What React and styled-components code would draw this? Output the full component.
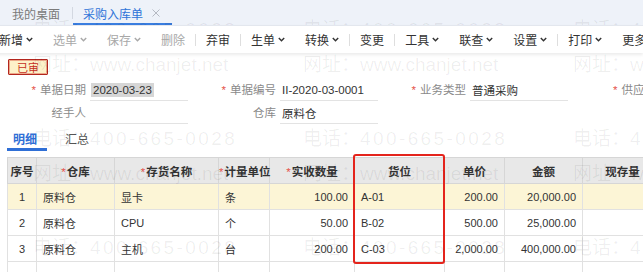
import React from 'react';
import styled, { createGlobalStyle } from 'styled-components';

const GlobalStyle = createGlobalStyle`
  html, body { margin: 0; padding: 0; background: #fff; }
  body {
    font-family: "Liberation Sans", "Noto Sans CJK SC", sans-serif;
    color: #333;
  }
`;

const Page = styled.div`
  position: relative;
  width: 643px;
  height: 272px;
  overflow: hidden;
  background: #fff;
`;

// ---- top page tabs
const TabBar = styled.div`
  display: flex;
  align-items: stretch;
  height: 25px;
  background: #eef2f9;
`;

const PageTab = styled.div`
  display: flex;
  align-items: center;
  gap: 9px;
  box-sizing: border-box;
  padding: 3px ${p => p.$right}px 0 ${p => p.$left}px;
  font-size: 12px;
  color: ${p => (p.$active ? '#2f74d8' : '#7a7a7a')};
  border-bottom: 2px solid ${p => (p.$active ? '#3a7ee0' : 'transparent')};
  white-space: nowrap;
`;

const TabDivider = styled.div`
  align-self: center;
  width: 1px;
  height: 12px;
  background: #d3d8e1;
`;

// ---- toolbar
const Toolbar = styled.div`
  position: relative;
  z-index: 1;
  display: flex;
  align-items: center;
  height: 27px;
  margin-left: -11px;
  background: #fff;
  border-top: 1px solid #e3e7ee;
  box-shadow: 0 2px 3px rgba(0, 0, 0, 0.08);
`;

const ToolItem = styled.div`
  display: flex;
  align-items: center;
  gap: 3px;
  flex-shrink: 0;
  padding: 0 10px;
  font-size: 12px;
  white-space: nowrap;
  color: ${p => (p.$disabled ? '#a8a8a8' : '#333')};
`;

const ToolSep = styled.div`
  flex-shrink: 0;
  width: 1px;
  height: 12px;
  background: #dedede;
`;

// ---- status
const StatusRow = styled.div`
  display: flex;
  padding: 6px 0 0 8px;
`;

const Badge = styled.div`
  display: flex;
  align-items: center;
  justify-content: center;
  box-sizing: border-box;
  width: 40px;
  height: 16px;
  border: 1px solid #b3261e;
  box-shadow: inset 0 0 0 1px rgba(214, 80, 60, 0.45);
  border-radius: 1px;
  background: #fdf1c9;
  color: #c62f25;
  font-size: 11px;
`;

// ---- header form
const Form = styled.div`
  margin-top: 4px;
  padding-left: 4px;
`;

const FormRow = styled.div`
  display: flex;
  height: 23px;
`;

const Field = styled.div`
  display: flex;
  align-items: flex-start;
  flex-shrink: 0;
  width: 190px;
`;

const Label = styled.div`
  width: 82px;
  margin-right: 4px;
  line-height: 22px;
  text-align: right;
  font-size: 11.5px;
  color: #8a8a8a;
  white-space: nowrap;
`;

const Star = styled.span`
  color: #e5534b;
  margin-right: 4px;
`;

const Value = styled.div`
  display: flex;
  align-items: center;
  box-sizing: border-box;
  width: 98px;
  height: 22px;
  padding-left: 2px;
  border-bottom: 1px solid #e3e3e3;
  font-size: 11.5px;
  color: #333;
  white-space: nowrap;
`;

const Selected = styled.span`
  margin-left: -1px;
  padding: 1px 2px;
  background: #d6d6d6;
`;

// ---- detail tabs
const DetailTabs = styled.div`
  display: flex;
  gap: 12px;
  padding-left: 7px;
`;

const DetailTab = styled.div`
  box-sizing: border-box;
  height: 26px;
  padding: 5px ${p => (p.$active ? 10 : 6)}px 0 6px;
  border-bottom: 3px solid ${p => (p.$active ? '#2f6fd6' : 'transparent')};
  font-size: 12px;
  font-weight: ${p => (p.$active ? 'bold' : 'normal')};
  color: ${p => (p.$active ? '#2f6fd6' : '#555')};
`;

// ---- grid
const TableWrap = styled.div`
  position: relative;
  margin: 6px 0 0 7px;
`;

const Grid = styled.table`
  border-collapse: collapse;
  table-layout: fixed;
  width: 655px;
  font-size: 11px;
`;

const Th = styled.th`
  height: 25px;
  padding: 0;
  background: #e8e8e8;
  border: 1px solid #d6d6d6;
  font-size: 11.5px;
  font-weight: bold;
  color: #333;
  text-align: center;
  white-space: nowrap;
`;

const HeadStar = styled.span`
  color: #e5534b;
  font-weight: normal;
  margin-right: 1px;
`;

const Td = styled.td`
  height: 25px;
  padding: 0 6px;
  border: 1px solid #e1e1e1;
  background: ${p => (p.$hl ? '#fcf5d6' : '#fff')};
  text-align: ${p => p.$align};
  color: #333;
  white-space: nowrap;
  overflow: hidden;
`;

const Highlight = styled.div`
  position: absolute;
  left: 346px;
  top: -3px;
  width: 92px;
  height: 110px;
  box-sizing: border-box;
  border: 2px solid #e4241c;
  border-radius: 3px;
  pointer-events: none;
`;

// ---- watermark
const Watermark = styled.div`
  position: absolute;
  top: 19px;
  left: 33px;
  display: grid;
  grid-template-columns: repeat(3, 270px);
  grid-auto-rows: 109px;
  pointer-events: none;
  color: rgba(0, 0, 0, 0.065);
  font-size: 19px;
  line-height: 22px;
  white-space: nowrap;
`;

const WmTile = styled.div`
  display: flex;
  flex-direction: column;
  gap: 13px;
`;

const WmDigits = styled.span`
  letter-spacing: 2.4px;
`;

const Chevron = () => (
  <svg width="7" height="5" viewBox="0 0 7 5">
    <path d="M0.8 0.9 L3.5 3.8 L6.2 0.9" fill="none" stroke="currentColor" strokeWidth="1.4" />
  </svg>
);

const CloseIcon = () => (
  <svg width="8" height="8" viewBox="0 0 8 8">
    <path d="M0.5 0.5 L7.5 7.5 M7.5 0.5 L0.5 7.5" stroke="#b5b9c2" strokeWidth="1" />
  </svg>
);

const tools = [
  { t: '新增', c: 1 }, { t: '选单', c: 1, d: 1 }, { t: '保存', c: 1, d: 1 }, { t: '删除', d: 1 }, '|',
  { t: '弃审' }, '|', { t: '生单', c: 1 }, { t: '转换', c: 1 }, '|', { t: '变更' }, '|',
  { t: '工具', c: 1 }, { t: '联查', c: 1 }, { t: '设置', c: 1 }, '|', { t: '打印', c: 1 }, { t: '更多', c: 1 },
];

const columns = [
  { w: 29, label: '序号', align: 'center' },
  { w: 78, label: '仓库', req: 1, align: 'left' },
  { w: 104, label: '存货名称', req: 1, align: 'left' },
  { w: 51, label: '计量单位', req: 1, align: 'left' },
  { w: 85, label: '实收数量', req: 1, align: 'right' },
  { w: 90, label: '货位', align: 'left' },
  { w: 60, label: '单价', align: 'right' },
  { w: 78, label: '金额', align: 'right' },
  { w: 80, label: '现存量', align: 'left' },
];

const rows = [
  ['1', '原料仓', '显卡', '条', '100.00', 'A-01', '200.00', '20,000.00', ''],
  ['2', '原料仓', 'CPU', '个', '50.00', 'B-02', '500.00', '25,000.00', ''],
  ['3', '原料仓', '主机', '台', '200.00', 'C-03', '2,000.00', '400,000.00', ''],
  ['', '', '', '', '', '', '', '', ''],
];

export default function App() {
  return (
    <Page>
      <GlobalStyle />
      <TabBar>
        <PageTab $left={12} $right={12}>我的桌面</PageTab>
        <TabDivider />
        <PageTab $active $left={10} $right={12}>
          采购入库单
          <CloseIcon />
        </PageTab>
      </TabBar>

      <Toolbar>
        {tools.map((it, i) =>
          it === '|' ? (
            <ToolSep key={i} />
          ) : (
            <ToolItem key={i} $disabled={it.d}>
              {it.t}
              {it.c ? <Chevron /> : null}
            </ToolItem>
          )
        )}
      </Toolbar>

      <StatusRow>
        <Badge>已审</Badge>
      </StatusRow>

      <Form>
        <FormRow>
          <Field>
            <Label><Star>*</Star>单据日期</Label>
            <Value><Selected>2020-03-23</Selected></Value>
          </Field>
          <Field>
            <Label><Star>*</Star>单据编号</Label>
            <Value>II-2020-03-0001</Value>
          </Field>
          <Field>
            <Label><Star>*</Star>业务类型</Label>
            <Value>普通采购</Value>
          </Field>
          <Field>
            <Label><Star>*</Star>供应商</Label>
            <Value />
          </Field>
        </FormRow>
        <FormRow>
          <Field>
            <Label>经手人</Label>
            <Value />
          </Field>
          <Field>
            <Label>仓库</Label>
            <Value>原料仓</Value>
          </Field>
        </FormRow>
      </Form>

      <DetailTabs>
        <DetailTab $active>明细</DetailTab>
        <DetailTab>汇总</DetailTab>
      </DetailTabs>

      <TableWrap>
        <Grid>
          <colgroup>
            {columns.map((c, i) => <col key={i} style={{ width: c.w }} />)}
          </colgroup>
          <thead>
            <tr>
              {columns.map((c, i) => (
                <Th key={i}>
                  {c.req ? <HeadStar>*</HeadStar> : null}
                  {c.label}
                </Th>
              ))}
            </tr>
          </thead>
          <tbody>
            {rows.map((r, ri) => (
              <tr key={ri}>
                {r.map((v, ci) => (
                  <Td key={ci} $hl={ri === 0} $align={columns[ci].align}>{v}</Td>
                ))}
              </tr>
            ))}
          </tbody>
        </Grid>
        <Highlight />
      </TableWrap>

      <Watermark>
        {Array.from({ length: 9 }).map((_, i) => (
          <WmTile key={i}>
            <span>电话：<WmDigits>400-665-0028</WmDigits></span>
            <span>网址：www.chanjet.net</span>
          </WmTile>
        ))}
      </Watermark>
    </Page>
  );
}
